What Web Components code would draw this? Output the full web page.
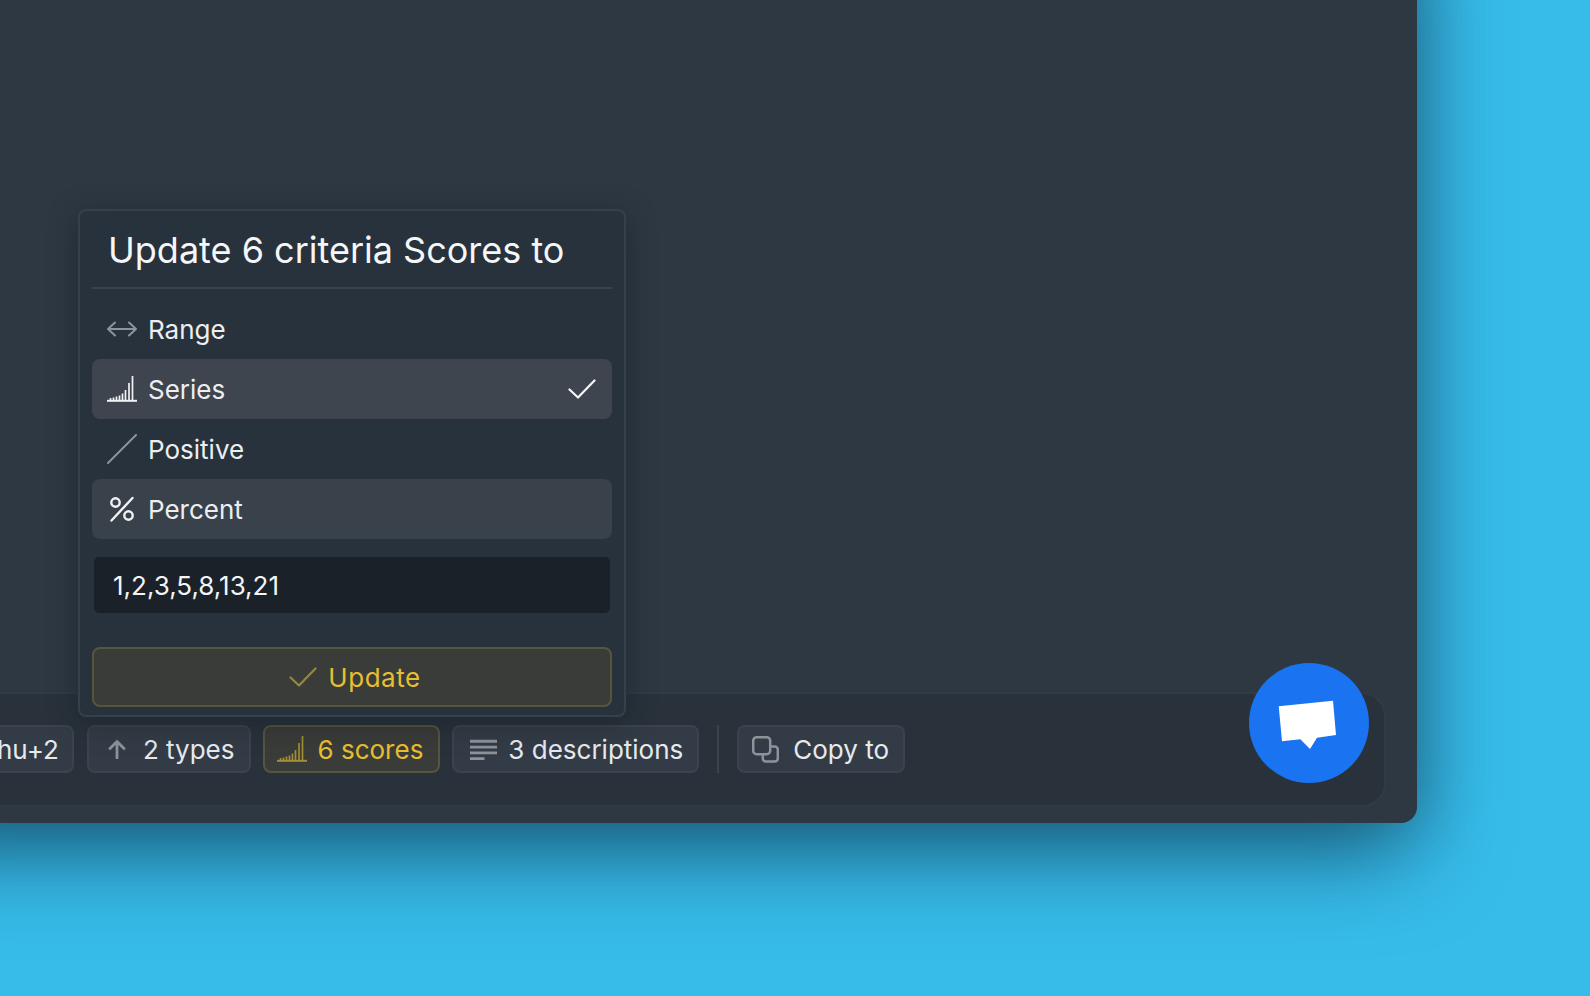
<!doctype html>
<html>
<head>
<meta charset="utf-8">
<title>Scores</title>
<style>
html,body{margin:0;height:100%;overflow:hidden;background:#37bcea;font-family:Inter,"Liberation Sans",sans-serif;color:#eef0f3}
</style>
</head>
<body>
<app-panel>
  <score-popup heading="Update 6 criteria Scores to" value="1,2,3,5,8,13,21">
    <popup-option slot="options" icon="range">Range</popup-option>
    <popup-option slot="options" icon="series" selected>Series</popup-option>
    <popup-option slot="options" icon="positive">Positive</popup-option>
    <popup-option slot="options" icon="percent" hovered>Percent</popup-option>
  </score-popup>
  <action-bar>
    <bar-chip class="first">hu+2</bar-chip>
    <bar-chip icon="arrow">2 types</bar-chip>
    <bar-chip icon="series" active>6 scores</bar-chip>
    <bar-chip icon="lines">3 descriptions</bar-chip>
    <bar-divider></bar-divider>
    <bar-chip icon="copy">Copy to</bar-chip>
  </action-bar>
  <chat-fab></chat-fab>
</app-panel>
<script>
const seriesBars = [[3.5,2],[6.5,2.5],[9.5,3.5],[12.5,4.5],[15.5,6.5],[18.5,10],[22,17],[25.5,24]]
  .map(([x, h]) => `M${x} 24V${24 - h}`).join('');
const icons = {
  range: `<svg width="30" height="16" viewBox="0 0 30 16" fill="none" stroke="currentColor" stroke-width="2" stroke-linecap="round" stroke-linejoin="round"><path d="M1 8h28M8 1.5 1 8l7 6.5M22 1.5 29 8l-7 6.5"/></svg>`,
  series: `<svg width="30" height="26" viewBox="0 0 30 26" fill="none" stroke="currentColor" stroke-width="1.7"><path stroke-width="2" d="M0 24.8h30"/><path d="${seriesBars}"/></svg>`,
  positive: `<svg width="30" height="30" viewBox="0 0 30 30" fill="none" stroke="currentColor" stroke-width="2" stroke-linecap="round"><path d="M1 29 29 1"/></svg>`,
  percent: `<svg width="26" height="26" viewBox="0 0 26 26" fill="none" stroke="currentColor" stroke-width="2.4" stroke-linecap="round"><circle cx="6.5" cy="6.5" r="4.2"/><circle cx="19.5" cy="19.5" r="4.2"/><path d="M2.5 24.5 23.5 2"/></svg>`,
  arrow: `<svg width="18" height="19" viewBox="0 0 18 19" fill="none" stroke="currentColor" stroke-width="2.8" stroke-linecap="round" stroke-linejoin="round"><path d="M9 18V2M2 8.5 9 1.5l7 7"/></svg>`,
  lines: `<svg style="margin-left:3px" width="28" height="21" viewBox="0 0 28 21" fill="none" stroke="currentColor" stroke-width="3"><path d="M0 2h28M0 8h28M0 14h28M0 20h15"/></svg>`,
  copy: `<svg style="margin-left:-3px" width="27" height="27" viewBox="0 0 27 27" fill="none" stroke="currentColor" stroke-width="2.5" stroke-linejoin="round"><rect x="1.2" y="1.2" width="17" height="17" rx="3.5"/><path d="M18.2 10.5h4.6a3 3 0 0 1 3 3v9a3 3 0 0 1-3 3h-9a3 3 0 0 1-3-3v-4.3"/></svg>`,
  check: `<svg width="28" height="20" viewBox="0 0 28 20" fill="none" stroke="currentColor" stroke-width="2.2" stroke-linecap="round" stroke-linejoin="round"><path d="M1.5 10.5 10 18.5 26.5 1.5"/></svg>`
};

class AppPanel extends HTMLElement {
  constructor() {
    super();
    // runs past the left and top of the window so the shadow doesn't fade at those edges
    this.attachShadow({mode: 'open'}).innerHTML = `
    <style>
    :host {
      display:flex;flex-direction:column;justify-content:flex-end;position:relative;
      width:1517px;height:923px;margin:-100px 0 0 -100px;box-sizing:border-box;padding-bottom:16px;
      background:#2e3842;border-radius:0 0 16px 0;
      box-shadow:0 34px 90px -6px rgba(10,45,70,.68),10px 0 60px rgba(40,70,80,.2);
    }
    </style>
    <slot></slot>`;
  }
}

class ActionBar extends HTMLElement {
  constructor() {
    super();
    this.attachShadow({mode: 'open'}).innerHTML = `
    <style>
    :host {
      display:flex;align-items:center;gap:13px;box-sizing:border-box;
      height:115px;margin:0 31px 0 70px;padding:0 0 2px;
      background:#29323b;border:2px solid #323b45;border-radius:24px;
    }
    </style>
    <slot></slot>`;
  }
}

class BarChip extends HTMLElement {
  constructor() {
    super();
    const icon = this.getAttribute('icon');
    this.attachShadow({mode: 'open'}).innerHTML = `
    <style>
    :host {
      display:flex;align-items:center;gap:11px;box-sizing:border-box;height:48px;
      padding:1px 14px 0 13px;font-size:26px;color:#e6e9ed;white-space:nowrap;
      background:#333c46;border:2px solid #3b444e;border-radius:8px;
    }
    :host(.first) {padding:1px 13px 0 23px;}
    :host([active]) {
      margin:0 -1px;padding-left:12px;padding-right:15px;
      background:#3a3c39;border-color:#58553f;color:#e8bf30;
    }
    i {display:flex;justify-content:center;align-items:center;width:30px;color:#8e939a;}
    :host([active]) i {color:#a38e35;}
    </style>
    ${icon ? `<i>${icons[icon]}</i>` : ''}<slot></slot>`;
  }
}

class BarDivider extends HTMLElement {
  constructor() {
    super();
    this.attachShadow({mode: 'open'}).innerHTML = `
    <style>
    :host {display:block;width:2px;height:48px;margin:0 5px;background:#3b444e;}
    </style>`;
  }
}

class ScorePopup extends HTMLElement {
  constructor() {
    super();
    this.attachShadow({mode: 'open'}).innerHTML = `
    <style>
    :host {
      position:absolute;left:178px;bottom:106px;width:548px;height:508px;box-sizing:border-box;
      display:flex;flex-direction:column;padding:0 12px 8px;
      background:#28323c;border:2px solid #36404a;border-radius:8px;
      box-shadow:0 6px 30px rgba(15,20,28,.4);
    }
    h2 {
      margin:0;height:78px;box-sizing:border-box;padding:2px 0 0 16px;display:flex;align-items:center;
      font-size:36px;font-weight:400;color:#f5f6f8;white-space:nowrap;
      border-bottom:2px solid #3a434d;flex:none;
    }
    .options {display:flex;flex-direction:column;margin-top:10px;}
    .field {
      margin:18px 2px 0;height:56px;box-sizing:border-box;padding:0 19px;display:flex;align-items:center;
      background:#1b2128;border-radius:5px;font-size:26px;color:#f2f4f6;
    }
    button {
      margin-top:auto;height:60px;display:flex;align-items:center;justify-content:center;gap:11px;
      font:inherit;font-size:26px;letter-spacing:.02em;color:#e8bf30;
      background:#3a3c39;border:2px solid #58553f;border-radius:8px;padding:0 0 0 6px;
    }
    button i {display:flex;color:#958747;}
    </style>
    <h2>${this.getAttribute('heading')}</h2>
    <div class="options"><slot name="options"></slot></div>
    <div class="field">${this.getAttribute('value')}</div>
    <button><i>${icons.check}</i>Update</button>`;
  }
}

class PopupOption extends HTMLElement {
  constructor() {
    super();
    this.attachShadow({mode: 'open'}).innerHTML = `
    <style>
    :host {
      display:flex;align-items:center;height:60px;box-sizing:border-box;padding:0 16px 0 15px;
      border-radius:8px;font-size:26px;color:#eceef1;
    }
    :host([selected]) {background:#3e454e;}
    :host([hovered]) {background:#39414b;}
    i {display:flex;justify-content:center;width:30px;margin-right:11px;color:#8e939a;}
    :host([selected]) i, :host([hovered]) i {color:#f0f2f4;}
    .tick {margin-left:auto;display:flex;color:#f5f6f8;}
    </style>
    <i>${icons[this.getAttribute('icon')]}</i><slot></slot>
    ${this.hasAttribute('selected') ? `<span class="tick">${icons.check}</span>` : ''}`;
  }
}

class ChatFab extends HTMLElement {
  constructor() {
    super();
    this.attachShadow({mode: 'open'}).innerHTML = `
    <style>
    :host {
      position:absolute;right:48px;bottom:40px;width:120px;height:120px;border-radius:50%;
      background:#1a73f0;display:block;
    }
    svg {display:block;}
    </style>
    <svg width="120" height="120" viewBox="0 0 120 120"><path fill="#fff" d="M29.7 43.3 84 37.7 87 72 68 74.7 61 86 51.3 76.3 33 78.3Z"/></svg>`;
  }
}

customElements.define('app-panel', AppPanel);
customElements.define('action-bar', ActionBar);
customElements.define('bar-chip', BarChip);
customElements.define('bar-divider', BarDivider);
customElements.define('score-popup', ScorePopup);
customElements.define('popup-option', PopupOption);
customElements.define('chat-fab', ChatFab);
</script>
</body>
</html>
